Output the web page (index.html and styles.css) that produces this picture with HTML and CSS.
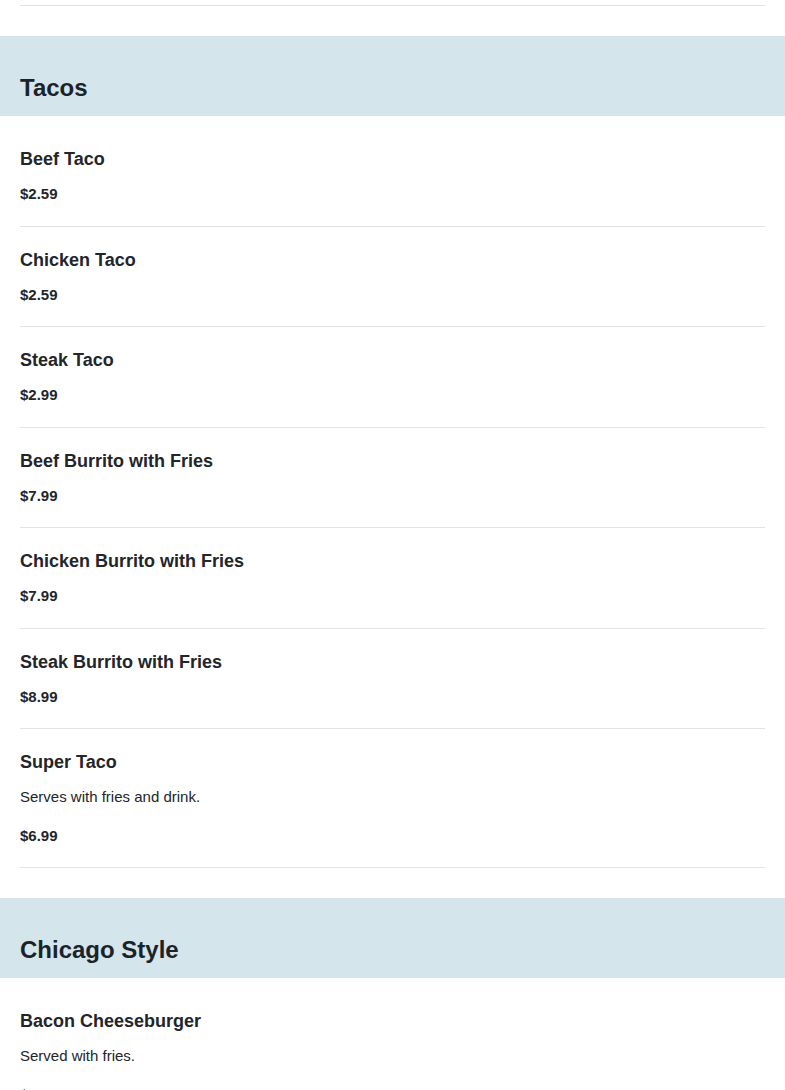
FILE: index.html
```html
<!doctype html>
<html>
  <head>
    <meta charset="UTF-8" />
    <meta name="viewport" content="width=device-width, initial-scale=1">
    <title>Menu</title>
    <link rel="stylesheet" href="styles.css">
  </head>
  <body>
    <div class="menu">
      <div class="list list-tail">
        <div class="item item-tail"></div>
      </div>

      <section class="category">
        <h2 class="category-title">Tacos</h2>
        <div class="list">
          <div class="item">
            <h3 class="item-name">Beef Taco</h3>
            <div class="item-price">$2.59</div>
          </div>
          <div class="item">
            <h3 class="item-name">Chicken Taco</h3>
            <div class="item-price">$2.59</div>
          </div>
          <div class="item">
            <h3 class="item-name">Steak Taco</h3>
            <div class="item-price">$2.99</div>
          </div>
          <div class="item">
            <h3 class="item-name">Beef Burrito with Fries</h3>
            <div class="item-price">$7.99</div>
          </div>
          <div class="item">
            <h3 class="item-name">Chicken Burrito with Fries</h3>
            <div class="item-price">$7.99</div>
          </div>
          <div class="item">
            <h3 class="item-name">Steak Burrito with Fries</h3>
            <div class="item-price">$8.99</div>
          </div>
          <div class="item">
            <h3 class="item-name">Super Taco</h3>
            <p class="item-desc">Serves with fries and drink.</p>
            <div class="item-price">$6.99</div>
          </div>
        </div>
      </section>

      <section class="category">
        <h2 class="category-title">Chicago Style</h2>
        <div class="list">
          <div class="item">
            <h3 class="item-name">Bacon Cheeseburger</h3>
            <p class="item-desc">Served with fries.</p>
            <div class="item-price">$8.99</div>
          </div>
        </div>
      </section>
    </div>
  </body>
</html>
```

FILE: styles.css
```css
body {
  margin: 0;
  font-family: "Liberation Sans", Arial, sans-serif;
  color: #222529;
  background: #fff;
}
.list {
  padding: 10px 20px 30px;
}
.list-tail {
  padding-top: 0;
}
.item {
  padding: 20px 0;
  border-bottom: 1px solid #e2e2e2;
}
.item-tail {
  padding: 0;
  height: 5px;
}
.category-title {
  margin: 0;
  padding: 38px 20px 14px;
  font-size: 24px;
  line-height: 28px;
  font-weight: bold;
  color: #1b2329;
  background: #d4e5ec;
}
.item-name {
  margin: 0 0 10px;
  font-size: 18px;
  line-height: 27px;
  font-weight: bold;
}
.item-desc {
  margin: 0 0 16px;
  font-size: 15px;
  line-height: 22.5px;
}
.item-price {
  font-size: 15px;
  line-height: 22.5px;
  font-weight: bold;
}
```
